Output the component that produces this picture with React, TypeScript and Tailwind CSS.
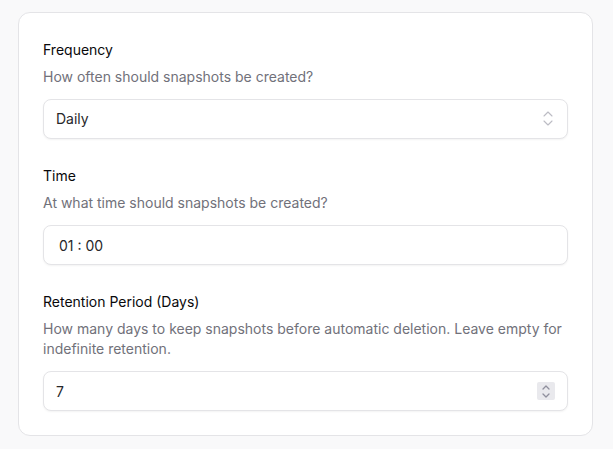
import { useState } from 'react';

function UpDownIcon({ className }: { className?: string }) {
  return (
    <svg width="10" height="15" viewBox="0 0 10 15" fill="none" className={className}>
      <path d="M1 5 5 1l4 4" stroke="currentColor" strokeWidth="1.1" strokeLinecap="round" strokeLinejoin="round" />
      <path d="M1 10l4 4 4-4" stroke="currentColor" strokeWidth="1.1" strokeLinecap="round" strokeLinejoin="round" />
    </svg>
  );
}

function Field({
  label,
  description,
  children,
}: {
  label: string;
  description: string;
  children: React.ReactNode;
}) {
  return (
    <div>
      <label className="block text-sm font-normal leading-[26px] text-[#09090b]">{label}</label>
      <p className="mt-1 text-sm leading-5 text-[#71717a]">{description}</p>
      <div className="mt-3">{children}</div>
    </div>
  );
}

export default function App() {
  const [frequency, setFrequency] = useState('daily');
  const [time, setTime] = useState('01 : 00');
  const [days, setDays] = useState('7');

  const inputClass =
    'h-10 w-full rounded-lg border border-[#e4e4e7] bg-white text-sm text-[#27272a] shadow-xs outline-none';

  return (
    <div
      className="min-h-screen bg-[#f9f9fa] pt-3"
      style={{ fontFamily: 'Inter, "Noto Sans", sans-serif' }}
    >
      <div className="ml-[18px] w-[575px] rounded-xl border border-[#e4e4e7] bg-white p-6">
        <div className="flex flex-col gap-6">
          <Field label="Frequency" description="How often should snapshots be created?">
            <div className="relative">
              <select
                value={frequency}
                onChange={(e) => setFrequency(e.target.value)}
                className={`${inputClass} appearance-none px-3`}
              >
                <option value="hourly">Hourly</option>
                <option value="daily">Daily</option>
                <option value="weekly">Weekly</option>
              </select>
              <UpDownIcon className="pointer-events-none absolute right-[15px] top-[12px] text-[#bcbcc4]" />
            </div>
          </Field>

          <Field label="Time" description="At what time should snapshots be created?">
            <input
              type="text"
              value={time}
              onChange={(e) => setTime(e.target.value)}
              className={`${inputClass} pl-[15px] pr-3`}
            />
          </Field>

          <Field
            label="Retention Period (Days)"
            description="How many days to keep snapshots before automatic deletion. Leave empty for indefinite retention."
          >
            <div className="relative">
              <input
                type="text"
                inputMode="numeric"
                value={days}
                onChange={(e) => setDays(e.target.value)}
                className={`${inputClass} px-3`}
              />
              <div className="pointer-events-none absolute right-[13px] top-[11px] flex h-[18px] w-[18px] flex-col items-center justify-center gap-[3px] rounded-[2px] bg-[#e9e9ed] text-[#8f8f9d]">
                <svg width="8" height="5" viewBox="0 0 8 5" fill="none">
                  <path d="M1 4 4 1l3 3" stroke="currentColor" strokeWidth="1.3" strokeLinecap="round" strokeLinejoin="round" />
                </svg>
                <svg width="8" height="5" viewBox="0 0 8 5" fill="none">
                  <path d="M1 1l3 3 3-3" stroke="currentColor" strokeWidth="1.3" strokeLinecap="round" strokeLinejoin="round" />
                </svg>
              </div>
            </div>
          </Field>
        </div>
      </div>
    </div>
  );
}
